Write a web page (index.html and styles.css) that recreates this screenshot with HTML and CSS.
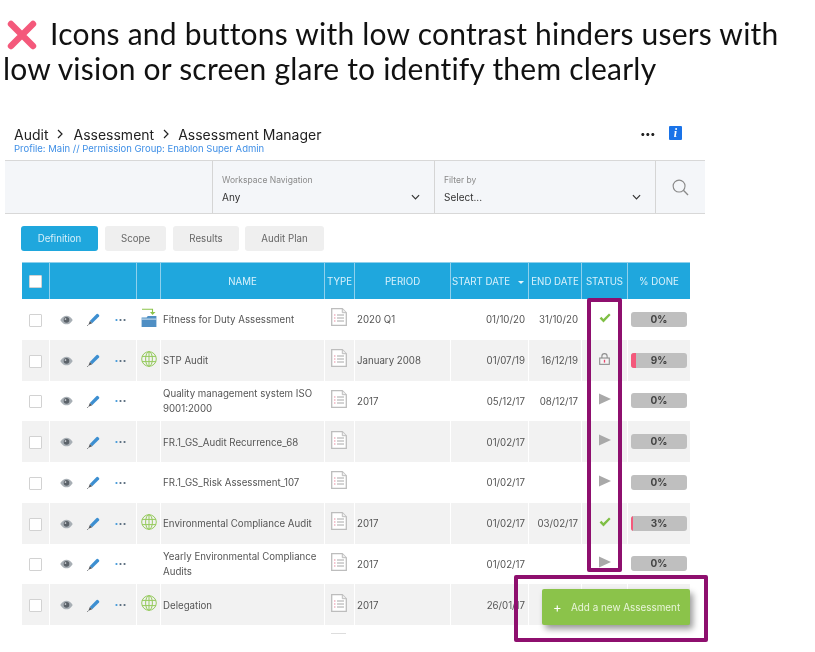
FILE: index.html
```html
<!DOCTYPE html>
<html lang="en">
<head>
<meta charset="utf-8">
<title>Assessment Manager</title>
<link rel="stylesheet" href="styles.css">
</head>
<body>
<svg class="defs" width="0" height="0" aria-hidden="true">
  <symbol id="i-eye" viewBox="0 0 14 10"><path d="M0.3 5C2.4 1.5 4.7 0.3 7 0.3S11.6 1.5 13.7 5C11.6 8.5 9.3 9.7 7 9.7S2.4 8.5 0.3 5Z" fill="#a8afb5"/><circle cx="7" cy="4.9" r="3" fill="#5b6269"/><circle cx="5.9" cy="3.9" r="0.9" fill="#dfe3e6"/></symbol>
  <symbol id="i-pencil" viewBox="0 0 13 13"><path d="M2.8 7.9 9.6 1.1a1 1 0 0 1 1.4 0l1 1a1 1 0 0 1 0 1.4L5.2 10.3Z" fill="#3d8fd1"/><path d="M2.8 7.9 5.2 10.3 1.4 11.7Z" fill="#55595e"/><path d="M1.4 11.7.4 12.7" stroke="#55595e" stroke-width="1"/></symbol>
  <symbol id="i-dots" viewBox="0 0 12 4"><circle cx="1.6" cy="2" r="1.2" fill="#3f97d8"/><circle cx="6" cy="2" r="1.2" fill="#55687a"/><circle cx="10.4" cy="2" r="1.2" fill="#55687a"/></symbol>
  <symbol id="i-globe" viewBox="0 0 16 16"><g fill="none" stroke="#95ca5c" stroke-width="1"><circle cx="8" cy="8" r="7.3"/><ellipse cx="8" cy="8" rx="3.4" ry="7.3"/><path d="M8 .7v14.6M1 5.4h14M1 10.6h14"/></g></symbol>
  <symbol id="i-doc" viewBox="0 0 16 18"><path d="M.7.7h10.6l4 4v12.6H.7Z" fill="#fff" stroke="#bdbdbd" stroke-width="1.3"/><path d="M11.3.7v4h4" fill="#eee" stroke="#bdbdbd" stroke-width="1"/><path d="M6 7h7M6 10h7M6 13h7" stroke="#9e9e9e" stroke-width=".9"/><path d="M3.2 7h1.2M3.2 10h1.2M3.2 13h1.2" stroke="#e0607e" stroke-width=".9"/></symbol>
  <symbol id="i-check" viewBox="0 0 12 10"><path d="M.6 5.4 2.4 3.8 4.4 6 10 .6 11.6 2 4.5 9.4Z" fill="#7fbf45"/></symbol>
  <symbol id="i-play" viewBox="0 0 12 12"><path d="M0 .4 12 6 0 11.6Z" fill="#a9a9a9"/></symbol>
  <symbol id="i-lock" viewBox="0 0 10 11"><path d="M2.6 4.6V3a2.4 2.4 0 0 1 4.8 0v1.6" fill="none" stroke="#8d8d8d" stroke-width="1"/><rect x=".6" y="4.6" width="8.8" height="5.8" fill="#f4f4f4" stroke="#8d8d8d" stroke-width="1"/><rect x="4.4" y="6.2" width="1.2" height="2.6" fill="#e9476e"/></symbol>
</svg>

<header class="headline">
  <h1><svg class="cross" viewBox="0 0 30 30" width="30" height="30" aria-hidden="true"><path d="M4 4 26 26M26 4 4 26" stroke="#f4597b" stroke-width="6.4" stroke-linecap="round"/></svg><span>Icons and buttons with low contrast hinders users with</span><br>low vision or screen glare to identify them clearly</h1>
</header>

<main class="app">
  <div class="topbar">
    <div>
      <nav class="crumbs">
        <span>Audit</span><svg class="crumb-sep" viewBox="0 0 6 10" width="6" height="10"><path d="M1 1 5 5 1 9" fill="none" stroke="#222" stroke-width="1.2"/></svg>
        <span>Assessment</span><svg class="crumb-sep sep-tight" viewBox="0 0 6 10" width="6" height="10"><path d="M1 1 5 5 1 9" fill="none" stroke="#222" stroke-width="1.2"/></svg>
        <span>Assessment Manager</span>
      </nav>
      <p class="profile">Profile: Main // Permission Group: Enablon Super Admin</p>
    </div>
    <div class="top-actions">
      <span class="more">•••</span>
      <span class="info">i</span>
    </div>
  </div>

  <section class="filters">
    <div class="filter-blank"></div>
    <div class="filter">
      <label>Workspace Navigation</label>
      <div class="select"><span>Any</span><svg viewBox="0 0 10 6" width="9" height="6"><path d="M1 1 5 5 9 1" fill="none" stroke="#333" stroke-width="1.3"/></svg></div>
    </div>
    <div class="filter">
      <label>Filter by</label>
      <div class="select"><span>Select...</span><svg viewBox="0 0 10 6" width="9" height="6"><path d="M1 1 5 5 9 1" fill="none" stroke="#333" stroke-width="1.3"/></svg></div>
    </div>
    <div class="filter-search"><svg viewBox="0 0 18 18" width="17" height="17"><circle cx="7.5" cy="7.5" r="6.3" fill="none" stroke="#8a8a8a" stroke-width="1.2"/><path d="M12 12 17 17" stroke="#8a8a8a" stroke-width="1.4"/></svg></div>
  </section>

  <div class="tabs">
    <button class="tab tab-active">Definition</button>
    <button class="tab tab-scope">Scope</button>
    <button class="tab tab-results">Results</button>
    <button class="tab tab-plan">Audit Plan</button>
  </div>

  <table class="grid">
    <colgroup>
      <col class="c-check"><col class="c-actions"><col class="c-icon"><col class="c-name"><col class="c-type"><col class="c-period"><col class="c-start"><col class="c-end"><col class="c-status"><col class="c-done">
    </colgroup>
    <thead>
      <tr>
        <th><span class="box box-head"></span></th><th></th><th></th><th>NAME</th><th>TYPE</th><th>PERIOD</th>
        <th class="sorted">START DATE<i class="caret"></i></th><th>END DATE</th><th>STATUS</th><th class="last">% DONE</th>
      </tr>
    </thead>
    <tbody>
      <tr>
        <td><span class="box"></span></td>
        <td><div class="acts"><svg class="a-eye"><use href="#i-eye"/></svg><svg class="a-pen"><use href="#i-pencil"/></svg><svg class="a-dots"><use href="#i-dots"/></svg></div></td>
        <td class="ic"><svg class="folder" viewBox="0 0 16 20" width="16" height="20"><path d="M1 1.2h10.5V5" fill="none" stroke="#8bc34a" stroke-width="1.1"/><path d="M9 4 11.5 7 14.5 4Z" fill="#8bc34a"/><path d="M.6 9.5h5l1.2-1.5h8.6v11H.6Z" fill="#4f8fc4"/><path d="M.6 10.6h14.8v1H.6Z" fill="#d7e6f3"/></svg></td>
        <td class="name">Fitness for Duty Assessment</td>
        <td class="ic"><svg class="doc"><use href="#i-doc"/></svg></td>
        <td class="period">2020 Q1</td><td class="date">01/10/20</td><td class="date">31/10/20</td>
        <td class="ic"><svg class="st-check"><use href="#i-check"/></svg></td>
        <td class="last"><div class="bar"><span>0%</span></div></td>
      </tr>
      <tr>
        <td><span class="box"></span></td>
        <td><div class="acts"><svg class="a-eye"><use href="#i-eye"/></svg><svg class="a-pen"><use href="#i-pencil"/></svg><svg class="a-dots"><use href="#i-dots"/></svg></div></td>
        <td class="ic"><svg class="globe"><use href="#i-globe"/></svg></td>
        <td class="name">STP Audit</td>
        <td class="ic"><svg class="doc"><use href="#i-doc"/></svg></td>
        <td class="period">January 2008</td><td class="date">01/07/19</td><td class="date">16/12/19</td>
        <td class="ic"><svg class="st-lock"><use href="#i-lock"/></svg></td>
        <td class="last"><div class="bar"><b class="fill" style="width:9%"></b><span>9%</span></div></td>
      </tr>
      <tr>
        <td><span class="box"></span></td>
        <td><div class="acts"><svg class="a-eye"><use href="#i-eye"/></svg><svg class="a-pen"><use href="#i-pencil"/></svg><svg class="a-dots"><use href="#i-dots"/></svg></div></td>
        <td class="ic"></td>
        <td class="name">Quality management system ISO 9001:2000</td>
        <td class="ic"><svg class="doc"><use href="#i-doc"/></svg></td>
        <td class="period">2017</td><td class="date">05/12/17</td><td class="date">08/12/17</td>
        <td class="ic"><svg class="st-play"><use href="#i-play"/></svg></td>
        <td class="last"><div class="bar"><span>0%</span></div></td>
      </tr>
      <tr>
        <td><span class="box"></span></td>
        <td><div class="acts"><svg class="a-eye"><use href="#i-eye"/></svg><svg class="a-pen"><use href="#i-pencil"/></svg><svg class="a-dots"><use href="#i-dots"/></svg></div></td>
        <td class="ic"></td>
        <td class="name">FR.1_GS_Audit Recurrence_68</td>
        <td class="ic"><svg class="doc"><use href="#i-doc"/></svg></td>
        <td class="period"></td><td class="date">01/02/17</td><td class="date"></td>
        <td class="ic"><svg class="st-play"><use href="#i-play"/></svg></td>
        <td class="last"><div class="bar"><span>0%</span></div></td>
      </tr>
      <tr>
        <td><span class="box"></span></td>
        <td><div class="acts"><svg class="a-eye"><use href="#i-eye"/></svg><svg class="a-pen"><use href="#i-pencil"/></svg><svg class="a-dots"><use href="#i-dots"/></svg></div></td>
        <td class="ic"></td>
        <td class="name">FR.1_GS_Risk Assessment_107</td>
        <td class="ic"><svg class="doc"><use href="#i-doc"/></svg></td>
        <td class="period"></td><td class="date">01/02/17</td><td class="date"></td>
        <td class="ic"><svg class="st-play"><use href="#i-play"/></svg></td>
        <td class="last"><div class="bar"><span>0%</span></div></td>
      </tr>
      <tr>
        <td><span class="box"></span></td>
        <td><div class="acts"><svg class="a-eye"><use href="#i-eye"/></svg><svg class="a-pen"><use href="#i-pencil"/></svg><svg class="a-dots"><use href="#i-dots"/></svg></div></td>
        <td class="ic"><svg class="globe"><use href="#i-globe"/></svg></td>
        <td class="name">Environmental Compliance Audit</td>
        <td class="ic"><svg class="doc"><use href="#i-doc"/></svg></td>
        <td class="period">2017</td><td class="date">01/02/17</td><td class="date">03/02/17</td>
        <td class="ic"><svg class="st-check"><use href="#i-check"/></svg></td>
        <td class="last"><div class="bar"><b class="fill" style="width:3%"></b><span>3%</span></div></td>
      </tr>
      <tr>
        <td><span class="box"></span></td>
        <td><div class="acts"><svg class="a-eye"><use href="#i-eye"/></svg><svg class="a-pen"><use href="#i-pencil"/></svg><svg class="a-dots"><use href="#i-dots"/></svg></div></td>
        <td class="ic"></td>
        <td class="name">Yearly Environmental Compliance Audits</td>
        <td class="ic"><svg class="doc"><use href="#i-doc"/></svg></td>
        <td class="period">2017</td><td class="date">01/02/17</td><td class="date"></td>
        <td class="ic"><svg class="st-play"><use href="#i-play"/></svg></td>
        <td class="last"><div class="bar"><span>0%</span></div></td>
      </tr>
      <tr>
        <td><span class="box"></span></td>
        <td><div class="acts"><svg class="a-eye"><use href="#i-eye"/></svg><svg class="a-pen"><use href="#i-pencil"/></svg><svg class="a-dots"><use href="#i-dots"/></svg></div></td>
        <td class="ic"><svg class="globe"><use href="#i-globe"/></svg></td>
        <td class="name">Delegation</td>
        <td class="ic"><svg class="doc"><use href="#i-doc"/></svg></td>
        <td class="period">2017</td><td class="date">26/01/17</td><td class="date"></td>
        <td class="ic"></td>
        <td class="last"></td>
      </tr>
    </tbody>
  </table>
  <div class="sliver"></div>

  <div class="mark mark-status"></div>
  <button class="add"><span class="plus">+</span>Add a new Assessment</button>
  <div class="mark mark-add"></div>
</main>
</body>
</html>
```

FILE: styles.css
```css
* { box-sizing: border-box; }
html, body { margin: 0; height: 652px; overflow: hidden; background: #fff; }
body { position: relative; font-family: "Inter", "Liberation Sans", sans-serif; color: #555; }
.defs { position: absolute; }

.headline { padding: 16px 0 0 3px; height: 122px; }
.headline h1 { margin: 0; font: 400 30px/35px "Lato", "Noto Sans", sans-serif; letter-spacing: .22px; color: #111; }
.cross { vertical-align: -5px; margin: 0 13px 0 4px; }
.headline, .topbar, .filters, .tabs, .grid, .add { filter: blur(.35px); }

.topbar { display: flex; justify-content: space-between; padding: 0 133px 0 14px; height: 38px; }
.crumbs { display: flex; align-items: center; height: 18px; font-size: 14px; color: #222; margin-top: 3px; }
.crumb-sep { margin: 0 10px 0 9px; }
.sep-tight { margin-right: 9px; }
.profile { margin: 0; font-size: 9.5px; line-height: 12px; color: #3f8fe6; }
.top-actions { display: flex; align-items: flex-start; gap: 14px; margin-top: 4px; }
.more { font-size: 10px; line-height: 14px; color: #222; letter-spacing: -0.6px; }
.info { width: 13px; height: 14px; background: #1a73e8; color: #fff; font: italic 700 12px/14px "Liberation Serif", serif; text-align: center; border-radius: 1px; }

.filters { display: grid; grid-template-columns: 207px 222px 221px 50px; width: 700px; height: 54px; margin-left: 5px; background: #f4f6f9; border-top: 1px solid #d8d8d8; border-bottom: 1px solid #d8d8d8; }
.filter { border-left: 1px solid #d5d5d5; padding: 14px 14px 0 9px; }
.filter:last-of-type { padding-right: 13px; }
.filter label { display: block; font-size: 8.5px; line-height: 11px; color: #8a8a8a; }
.select { display: flex; justify-content: space-between; align-items: center; margin-top: 4px; font-size: 10px; line-height: 14px; color: #333; }
.filter-search { border-left: 1px solid #d5d5d5; display: flex; align-items: center; justify-content: center; }

.tabs { display: flex; gap: 7px; margin: 12px 0 11px 21px; }
.tab { height: 25px; border: 0; border-radius: 3px; background: #efefef; color: #666; font: 400 9.7px/25px "Inter", sans-serif; padding: 0; }
.tab-active { width: 77px; background: #1fa7dd; color: #d7f0fa; }
.tab-scope { width: 61px; }
.tab-results { width: 66px; margin-right: -1px; }
.tab-plan { width: 79px; }

.grid { table-layout: fixed; width: 668px; margin-left: 22px; border-collapse: separate; border-spacing: 0; }
.c-check { width: 28px; } .c-actions { width: 87px; } .c-icon { width: 24px; } .c-name { width: 164px; } .c-type { width: 30px; }
.c-period { width: 96px; } .c-start { width: 78px; } .c-end { width: 53px; } .c-status { width: 46px; } .c-done { width: 62px; }

.grid th { height: 37px; padding: 0; background: #1fa7dd; color: #d9f1fb; font-weight: 400; font-size: 9.7px; border-right: 1px solid #8fd0ec; border-top: 1px solid #8fd0ec; text-align: center; white-space: nowrap; }
.grid th.last { border-right: 0; }
.sorted { text-align: left !important; padding-left: 1px !important; }
.caret { display: inline-block; margin-left: 8px; vertical-align: 1px; border: 3px solid transparent; border-top-color: #e4f5fc; border-bottom: 0; }

.grid td { height: 40.75px; padding: 0; font-size: 9.7px; line-height: 15px; color: #555; border-right: 1px solid #fff; }
.grid tbody tr:nth-child(even) td { background: #f2f2f2; }
.grid td.last { border-right: 0; }
.box { display: block; width: 13px; height: 13px; margin: 2px 0 0 7px; background: #fff; border: 1.5px solid #d2d2d2; border-radius: 1px; }
.box-head { margin-top: 0; border-color: #d2d2d2; }

.acts { display: flex; align-items: center; padding: 1px 0 0 10px; }
.a-eye { width: 13px; height: 10px; margin-right: 14px; }
.a-pen { width: 13px; height: 13px; margin-right: 15px; }
.a-dots { width: 11px; height: 4px; }

.ic svg { display: block; margin: 0 auto 3px; }
.ic .doc { width: 16px; height: 18px; margin: 0 auto 4px; transform: translateX(-1px); }
.globe { width: 16px; height: 16px; }
.st-check { width: 12px; height: 10px; }
.st-play { width: 12px; height: 12px; }
.st-lock { width: 11px; height: 12px; }
.grid td.name, .grid td.period { padding: 1px 0 0 2px; }
.grid td.date { text-align: right; padding: 1px 3px 0 0; }

.bar { position: relative; width: 56px; height: 15px; margin-left: 3px; background: #bfbfbf; border-radius: 3px; overflow: hidden; text-align: center; font-size: 10px; line-height: 15px; font-weight: 700; color: #444; }
.bar span { position: relative; }
.fill { position: absolute; left: 0; top: 0; bottom: 0; background: #f4597b; }

.sliver { width: 15px; height: 1px; margin: 8px 0 0 331px; background: #ddd; }

.mark { position: absolute; border: 4px solid #8e0f6e; border-radius: 2px; }
.mark-status { left: 587px; top: 298px; width: 35px; height: 274px; }
.mark-add { left: 514px; top: 575px; width: 194px; height: 67px; }
.add { position: absolute; left: 542px; top: 589px; width: 148px; height: 36px; border: 0; border-radius: 2px; background: #8bc34a; color: #e9f5da; font: 400 9.9px/36px "Inter", sans-serif; text-align: left; padding: 0 0 0 11px; box-shadow: 3px 4px 6px rgba(0,0,0,.4); }
.plus { display: inline-block; color: #fff; font-size: 13px; width: 18px; vertical-align: -1px; }
```
